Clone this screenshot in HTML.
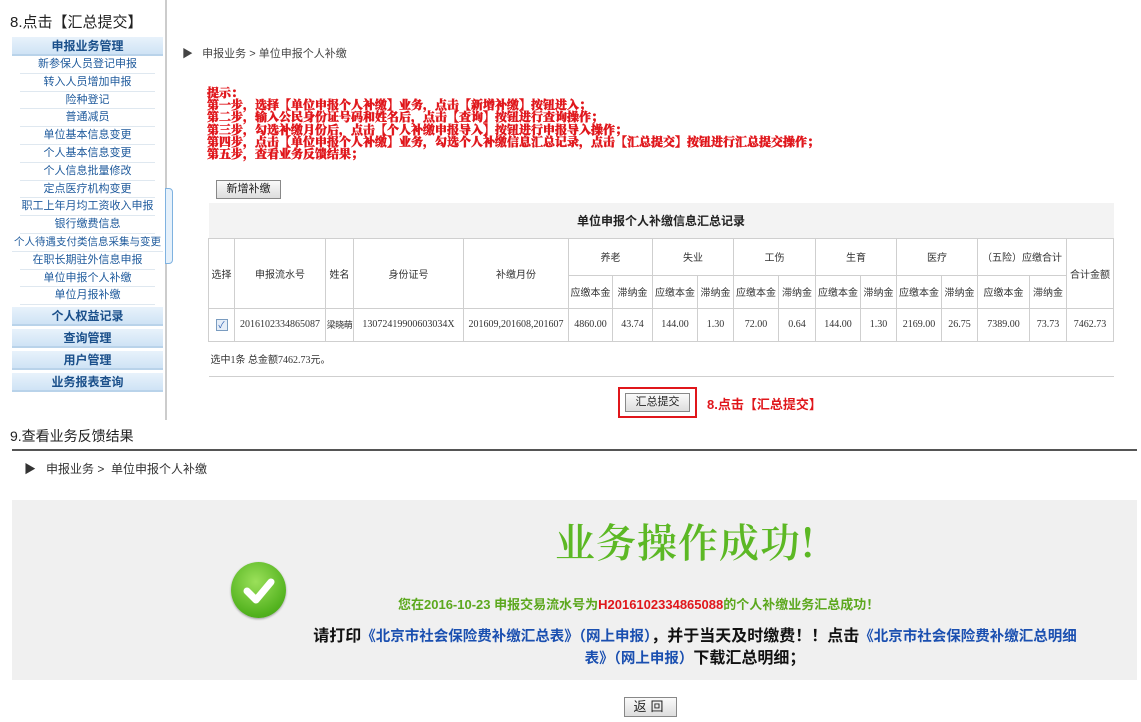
<!DOCTYPE html>
<html><head><meta charset="utf-8">
<style>
*{margin:0;padding:0;box-sizing:border-box}
body{width:1141px;height:722px;background:#fff;position:relative;overflow:hidden;font-family:"Liberation Sans","Noto Sans CJK SC",sans-serif;color:#333}
.a{position:absolute}
.sb{left:12px;width:151px;font-size:11px;text-align:center}
.hd{height:19px;line-height:19px;background:linear-gradient(#e8f2fb,#cfe3f5);color:#1a4f8a;font-weight:bold;font-size:12px;border-bottom:2px solid #b9d3ea}
.it{height:17.8px;line-height:17.8px;color:#1e5a9c;border-bottom:1px solid #dfe8f0;margin:0 8px;background:#fff}
.red{color:#e0161b;font-family:"Liberation Serif","Noto Serif CJK SC",serif;font-weight:900;font-size:12px;line-height:12.2px;-webkit-text-stroke:0.4px #e0161b}
table{border-collapse:collapse;table-layout:fixed;font-size:10px;font-family:"Liberation Serif","Noto Sans CJK SC",serif}
td{border:1px solid #cfcfcf;text-align:center;color:#333;padding:0;overflow:hidden;white-space:nowrap}
.btn{background:linear-gradient(#fafafa,#ddd);border:1px solid #888;font-size:11px;text-align:center;color:#222}
.bl{color:#1a4fb0;font-size:14.5px}
</style></head><body>
<div class="a" style="left:10px;top:11px;font-size:15px;color:#222">8.点击【汇总提交】</div>
<div class="a" style="left:165px;top:0;width:2px;height:420px;background:#ccc"></div>
<div class="a" style="left:165px;top:188px;width:8px;height:76px;border:1px solid #7fb2e0;border-radius:0 4px 4px 0;background:#e6f1fb"></div>
<div class="a sb" style="top:37px">
<div class="hd">申报业务管理</div>
<div class="it">新参保人员登记申报</div><div class="it">转入人员增加申报</div><div class="it">险种登记</div><div class="it">普通减员</div><div class="it">单位基本信息变更</div><div class="it">个人基本信息变更</div><div class="it">个人信息批量修改</div><div class="it">定点医疗机构变更</div><div class="it">职工上年月均工资收入申报</div><div class="it">银行缴费信息</div><div class="it" style="margin:0;font-size:10.5px">个人待遇支付类信息采集与变更</div><div class="it">在职长期驻外信息申报</div><div class="it">单位申报个人补缴</div><div class="it">单位月报补缴</div>
<div class="hd" style="margin-top:2px">个人权益记录</div><div class="hd" style="margin-top:3px">查询管理</div><div class="hd" style="margin-top:3px">用户管理</div><div class="hd" style="margin-top:3px">业务报表查询</div>
</div>
<div class="a" style="left:182px;top:45px;font-size:11px;color:#444">▶ &nbsp; 申报业务 &gt; 单位申报个人补缴</div>
<div class="a red" style="left:207px;top:87px">提示：<br>第一步，选择【单位申报个人补缴】业务，点击【新增补缴】按钮进入；<br>第二步，输入公民身份证号码和姓名后，点击【查询】按钮进行查询操作；<br>第三步，勾选补缴月份后，点击【个人补缴申报导入】按钮进行申报导入操作；<br>第四步，点击【单位申报个人补缴】业务，勾选个人补缴信息汇总记录，点击【汇总提交】按钮进行汇总提交操作；<br>第五步，查看业务反馈结果；</div>
<div class="a btn" style="left:216px;top:180px;width:65px;height:19px;line-height:17px">新增补缴</div>
<table class="a" style="left:208px;top:203px;width:905px">
<colgroup><col style="width:26px"><col style="width:91px"><col style="width:28px"><col style="width:110px"><col style="width:105px"><col style="width:44px"><col style="width:40px"><col style="width:45px"><col style="width:36px"><col style="width:45px"><col style="width:37px"><col style="width:45px"><col style="width:36px"><col style="width:45px"><col style="width:36px"><col style="width:52px"><col style="width:37px"><col style="width:47px"></colgroup>
<tr style="height:35px;background:#f3f3f3"><td colspan="18" style="font-weight:bold;font-size:12px;color:#222;border-top:none;border-left:none;border-right:none">单位申报个人补缴信息汇总记录</td></tr>
<tr style="height:37px"><td rowspan="2">选择</td><td rowspan="2">申报流水号</td><td rowspan="2">姓名</td><td rowspan="2">身份证号</td><td rowspan="2">补缴月份</td><td colspan="2">养老</td><td colspan="2">失业</td><td colspan="2">工伤</td><td colspan="2">生育</td><td colspan="2">医疗</td><td colspan="2">（五险）应缴合计</td><td rowspan="2">合计金额</td></tr>
<tr style="height:33px"><td>应缴本金</td><td>滞纳金</td><td>应缴本金</td><td>滞纳金</td><td>应缴本金</td><td>滞纳金</td><td>应缴本金</td><td>滞纳金</td><td>应缴本金</td><td>滞纳金</td><td>应缴本金</td><td>滞纳金</td></tr>
<tr style="height:33px"><td><span style="display:inline-block;width:12px;height:12px;border:1px solid #7a9cc0;background:#e6eef8;color:#2a5db0;font-size:9px;line-height:10px">✓</span></td><td>2016102334865087</td><td style="font-size:9px;letter-spacing:-0.5px">梁晓萌</td><td>13072419900603034X</td><td>201609,201608,201607</td><td>4860.00</td><td>43.74</td><td>144.00</td><td>1.30</td><td>72.00</td><td>0.64</td><td>144.00</td><td>1.30</td><td>2169.00</td><td>26.75</td><td>7389.00</td><td>73.73</td><td>7462.73</td></tr>
<tr style="height:35px"><td colspan="18" style="text-align:left;padding-left:2px;border-left:none;border-right:none">选中1条 总金额7462.73元。</td></tr>
</table>
<div class="a" style="left:618px;top:387px;width:79px;height:31px;border:2px solid #e0161b"></div>
<div class="a btn" style="left:625px;top:393px;width:65px;height:19px;line-height:17px">汇总提交</div>
<div class="a" style="left:707px;top:394px;color:#e0161b;font-weight:bold;font-size:13px">8.点击【汇总提交】</div>
<div class="a" style="left:10px;top:426px;font-size:14px;color:#222">9.查看业务反馈结果</div>
<div class="a" style="left:12px;top:449px;width:1125px;height:2px;background:#555"></div>
<div class="a" style="left:24px;top:460px;font-size:12px;color:#333">▶ &nbsp; 申报业务 &gt; &nbsp;单位申报个人补缴</div>
<div class="a" style="left:12px;top:500px;width:1125px;height:180px;background:#f0f0f0"></div>
<div class="a" style="left:555px;top:512px;font-size:40px;color:#5cb824;font-family:'Noto Serif CJK SC',serif;font-weight:600;letter-spacing:1px">业务操作成功!</div>
<div class="a" style="left:231px;top:562px;width:55px;height:56px;border-radius:50%;background:radial-gradient(circle at 45% 35%,#9be05a,#52b21e 70%,#3d9a15);box-shadow:0 1px 2px #999"></div>
<svg class="a" style="left:231px;top:562px" width="55" height="56"><path d="M16 29 L25 38 L40 20" stroke="#fff" stroke-width="7" fill="none" stroke-linecap="round" stroke-linejoin="round"/></svg>
<div class="a" style="left:398px;top:594px;font-size:13px;font-weight:bold;color:#5ca81e">您在2016-10-23 申报交易流水号为<span style="color:#e0161b">H2016102334865088</span>的个人补缴业务汇总成功！</div>
<div class="a" style="left:280px;top:626px;width:830px;text-align:center;font-size:16px;font-weight:bold;color:#111;line-height:21px;white-space:nowrap">请打印<span class="bl">《北京市社会保险费补缴汇总表》（网上申报）</span>，并于当天及时缴费！！点击<span class="bl">《北京市社会保险费补缴汇总明细</span><br><span class="bl">表》（网上申报）</span>下载汇总明细；</div>
<div class="a btn" style="left:624px;top:697px;width:53px;height:20px;line-height:18px;font-size:13px;letter-spacing:4px">返回</div>
</body></html>
